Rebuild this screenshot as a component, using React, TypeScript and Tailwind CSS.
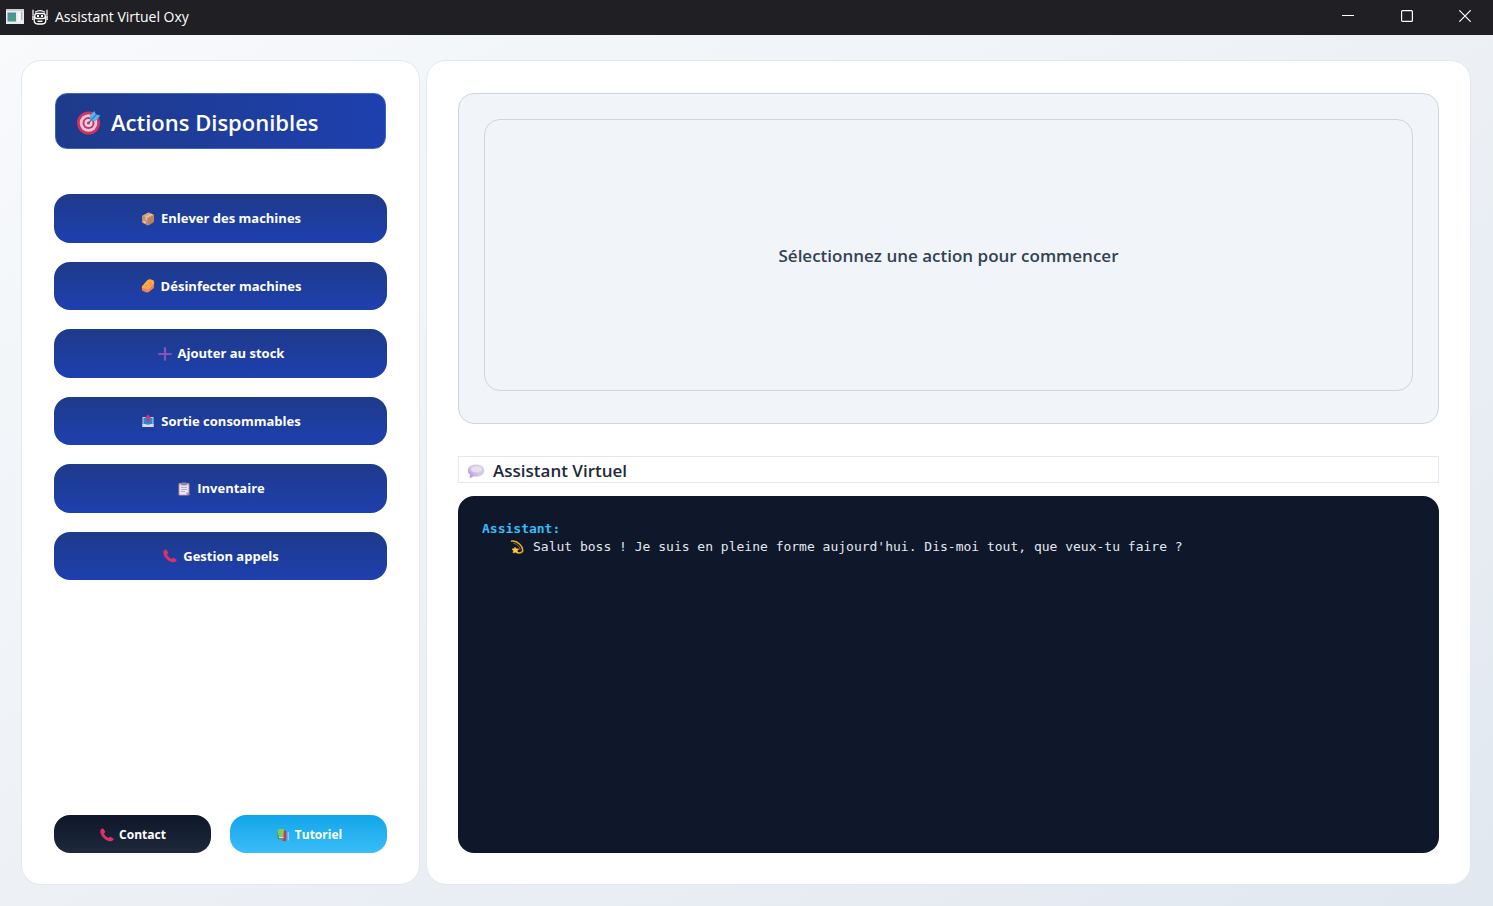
import type { ReactNode } from "react";

function TargetIcon() {
  return (
    <svg viewBox="0 0 26 26" className="size-[26px] shrink-0" aria-hidden="true">
      <circle cx="12.5" cy="14" r="11.500" fill="#d0335f" />
      <circle cx="12.5" cy="14" r="8.800" fill="#e6c6de" />
      <circle cx="12.5" cy="14" r="6" fill="#d0335f" />
      <circle cx="12.5" cy="14" r="4" fill="#ecd7ea" />
      <circle cx="12.5" cy="14" r="1.600" fill="#d0335f" />
      <path d="M12.500 14 18 8.500" stroke="#5b5f8f" strokeWidth="1.500" />
      <path d="m14.500 11.500-.6-5L18.500 2l1.300 3.500 4.500 1-4.700 5.400z" fill="#55b4ee" />
      <path d="m15 11 5.500-5.500" stroke="#2a7fd0" strokeWidth="1.200" />
    </svg>
  );
}

function BoxIcon() {
  return (
    <svg viewBox="0 0 14 14" className="size-[14px] shrink-0" aria-hidden="true">
      <path d="M7.500.500 13 3v7l-5.500 3.500L1 10.500V4z" fill="#b98260" />
      <path d="M7.500.500 13 3 7 6 1 4z" fill="#d9a77d" />
      <path d="M7 6v7.500L1 10.500V4z" fill="#c58f73" />
      <path d="m10.500 1.800-6 3v3l1.500.700V5.500l6-3z" fill="#e7c4a0" />
      <path d="m2.500 8.500 2 1v2l-2-1z" fill="#e8d0d4" />
    </svg>
  );
}

function SpongeIcon() {
  return (
    <svg viewBox="0 0 14 14" className="size-[14px] shrink-0" aria-hidden="true">
      <path d="M.800 8 6 1.800Q7.500 0 9.500.500l2.500.800q1.400.700 1.200 2.500L12.800 9 7.500 13.200q-1 .800-2.500 0L1.800 12Q.600 11 .800 8z" fill="#f47d62" />
      <path d="M.800 7.500 6 1.800Q7.500 0 9.500.500l2.500.800q1.500 1 .900 3L8 10q-1 1-2.500.200L1.800 9Q.600 8.500.800 7.500z" fill="#fdac45" />
      <g fill="#e98734">
        <circle cx="8" cy="3.500" r=".6" />
        <circle cx="5" cy="6.500" r=".7" />
        <circle cx="9.500" cy="5" r=".6" />
        <circle cx="6.500" cy="8.500" r=".5" />
      </g>
    </svg>
  );
}

function PlusIcon() {
  return (
    <svg viewBox="0 0 14 14" className="size-[14px] shrink-0" aria-hidden="true">
      <path d="M7 1.200v11.600M1.200 7h11.600" stroke="#8355b8" strokeWidth="2.200" strokeLinecap="round" />
    </svg>
  );
}

function OutboxIcon() {
  return (
    <svg viewBox="0 0 14 14" className="size-[14px] shrink-0" aria-hidden="true">
      <path d="M1.500 3h11v10h-11z" fill="#c9cbe6" />
      <path d="M2.500 4h9v6.500h-9z" fill="#238bd3" />
      <path d="M1.500 10h3l1 1h3l1-1h3v3h-11z" fill="#ded9ed" />
      <path d="M7 .300 10 4H8.200v4H5.800V4H4z" fill="#dc3167" />
    </svg>
  );
}

function ClipboardIcon() {
  return (
    <svg viewBox="0 0 14 14" className="size-[14px] shrink-0" aria-hidden="true">
      <rect x="1.500" y="1" width="11" height="12.500" rx="1" fill="#b58d91" />
      <path d="M2.500 2.500h9v7.500L9 12.700H2.500z" fill="#eee6f7" />
      <rect x="4" y=".5" width="6" height="3" rx="1" fill="#8c889f" />
      <path d="M4 5.500h6M4 7.500h6M4 9.500h4" stroke="#a19dba" strokeWidth=".8" />
      <path d="M9 12.700V10h2.500z" fill="#c9bdd6" />
    </svg>
  );
}

function PhoneIcon() {
  return (
    <svg viewBox="0 0 14 14" className="size-[14px] shrink-0" aria-hidden="true">
      <path
        d="M1 1.300Q2.500-.300 3.700 1L5 3.300q.500 1-.500 1.700-.700.500-.200 1.200 1.300 2.500 3.700 3.600.700.300 1.200-.400.700-.900 1.700-.300l2.400 1.500q.700.600 0 1.400-2 2.200-5.500.800Q1.500 10 .400 4.500.100 2.500 1 1.300z"
        fill="#dc3067"
      />
    </svg>
  );
}

function BooksIcon() {
  return (
    <svg viewBox="0 0 14 14" className="size-[14px] shrink-0" aria-hidden="true">
      <path d="M9.500 4h3.500v8.500H9.500z" fill="#5b8fd6" />
      <path d="M11.500 4H13v8.500h-1.500z" fill="#9cc0ec" />
      <path d="M6.500 2.500H10V13H6.500z" fill="#c0395f" />
      <path d="M1.500 2.500 3 1h5l-.500 8H1.500z" fill="#83ca57" />
      <path d="M1.500 9h6v1.500H2.500z" fill="#d8e8d0" />
      <path d="M1.500 2.500V10l1 1.300H7v-1H3z" fill="#3b8e58" />
    </svg>
  );
}

function BubbleIcon() {
  return (
    <svg viewBox="0 0 18 16" className="h-[16px] w-[18px] shrink-0" aria-hidden="true">
      <defs>
        <linearGradient id="bubble" x1="1" y1="0" x2="0" y2="1">
          <stop offset="0" stopColor="#d8d5df" />
          <stop offset=".55" stopColor="#d3c6e8" />
          <stop offset="1" stopColor="#a985d6" />
        </linearGradient>
      </defs>
      <path d="M9 1.500c5 0 8.300 2.300 8.300 5.900S14 13.500 9 13.500q-1.300 0-2.500-.3Q5 14.800 2.300 15q1-1.300.7-3.200Q.700 10.300.700 7.500C.700 3.800 4 1.500 9 1.500z" fill="url(#bubble)" />
      <ellipse cx="9.500" cy="6.300" rx="5.500" ry="3" fill="#eeeaf5" opacity=".7" />
    </svg>
  );
}

function DizzyIcon() {
  return (
    <svg viewBox="0 0 14 14" className="size-[14px] shrink-0" aria-hidden="true">
      <path d="M1 1.200Q5.500.200 9.500 4t3 7.500Q10.500 13.600 6.500 12.500" fill="none" stroke="#e9ad22" strokeWidth="1.500" />
      <path d="M3.500 3.200Q7 4 8.500 6t1.700 4" fill="none" stroke="#b57f1c" strokeWidth=".8" />
      <path d="m5 7.200 1.200 1.600 2.500.200-1.500 1.700.5 2.100-2.400-.600-2.300.600.500-2.100L2 9l2.100-.200z" fill="#ffcb3c" stroke="#ffcb3c" strokeWidth=".6" />
    </svg>
  );
}

function RobotIcon() {
  return (
    <svg viewBox="0 0 16 16" className="size-[16px] shrink-0" fill="none" stroke="#fff" aria-hidden="true">
      <path d="M3 3.200Q8 .200 13 3.200M2.200 7v5q.300 3 3.300 3h5q3 0 3.300-3V7" strokeWidth="1.300" />
      <path d="M1 .800v6M15 .800v6M.900 7v4M15.100 7v4" strokeWidth="1.200" />
      <rect x="2.800" y="4.500" width="10.400" height="5" rx="2" strokeWidth="1.300" />
      <path d="M5 7.100h2M9 7.100h2" strokeWidth="2" />
      <path d="M5.500 12.300h5" strokeWidth="1.400" />
    </svg>
  );
}

function AppIcon() {
  return (
    <svg viewBox="0 0 18 15" className="h-[15px] w-[18px] shrink-0" aria-hidden="true">
      <defs>
        <linearGradient id="app-pane" x1="0" y1="0" x2="1" y2="1">
          <stop offset="0" stopColor="#4c8fa6" />
          <stop offset="1" stopColor="#4e9b78" />
        </linearGradient>
      </defs>
      <path d="M0 0h18v15H0z" fill="#e9ebec" />
      <path d="M0 0h18v2H0z" fill="#c9cfd2" />
      <path d="M1.500 3.500h8.500v9H1.500z" fill="url(#app-pane)" />
      <path d="M11.500 3.500H14v9h-2.500z" fill="#f8f8f8" />
      <path d="M15 2.500h1.500v8.500H15z" fill="#b5babd" />
    </svg>
  );
}

const actions: { label: string; icon: ReactNode }[] = [
  { label: "Enlever des machines", icon: <BoxIcon /> },
  { label: "Désinfecter machines", icon: <SpongeIcon /> },
  { label: "Ajouter au stock", icon: <PlusIcon /> },
  { label: "Sortie consommables", icon: <OutboxIcon /> },
  { label: "Inventaire", icon: <ClipboardIcon /> },
  { label: "Gestion appels", icon: <PhoneIcon /> },
];

function TitleBar() {
  return (
    <header className="flex h-[35px] shrink-0 items-center justify-between bg-[#202024] text-white">
      <div className="flex items-center pb-0.5 pl-[6px]">
        <AppIcon />
        <span className="ml-2 mr-[7px]">
          <RobotIcon />
        </span>
        <span className="text-[14px] leading-5">Assistant Virtuel Oxy</span>
      </div>
      <div className="flex h-full items-center pb-[3px]">
        <button type="button" aria-label="Réduire" className="flex h-full w-[58px] items-center justify-center">
          <svg viewBox="0 0 12 12" className="size-3" stroke="#fff" aria-hidden="true">
            <path d="M0 5.500h12" />
          </svg>
        </button>
        <button type="button" aria-label="Agrandir" className="flex h-full w-[60px] items-center justify-center">
          <svg viewBox="0 0 12 12" className="size-3" stroke="#fff" fill="none" aria-hidden="true">
            <rect x=".6" y=".6" width="10.800" height="10.800" rx="1" strokeWidth="1.200" />
          </svg>
        </button>
        <button type="button" aria-label="Fermer" className="flex h-full w-14 items-center justify-center">
          <svg viewBox="0 0 12 12" className="size-3" stroke="#fff" aria-hidden="true">
            <path d="m.3.3 11.400 11.400M11.700.3.3 11.700" strokeWidth="1.200" />
          </svg>
        </button>
      </div>
    </header>
  );
}

export default function App() {
  return (
    <div className="flex min-h-screen flex-col bg-linear-to-br from-[#f8fafc] to-[#e2e8f0] font-['Open_Sans','Noto_Sans',sans-serif]">
      <TitleBar />
      <div className="flex flex-1 gap-[6px] pt-[25px] pr-[22px] pb-[21px] pl-[21px]">
        <aside className="flex w-[399px] shrink-0 flex-col rounded-[20px] border border-[#e2e8f0] bg-white px-8 pt-8 pb-[31px]">
          <h1 className="mx-px flex h-[56px] items-center gap-[9px] rounded-xl border border-[#3b66c8] bg-linear-to-r from-[#1e3a8a] to-[#1e40af] px-5 pt-0.5 text-[22px] font-semibold text-white">
            <TargetIcon />
            Actions Disponibles
          </h1>
          <nav className="mt-[45px] grid h-[386px] grid-rows-6 gap-[19px]">
            {actions.map((action) => (
              <button
                key={action.label}
                type="button"
                className="flex items-center justify-center gap-[6px] rounded-2xl bg-linear-to-b from-[#1e3a8a] to-[#1e40af] pt-px pl-px text-[13px] font-bold text-white"
              >
                {action.icon}
                {action.label}
              </button>
            ))}
          </nav>
          <div className="mt-auto grid grid-cols-2 gap-[19px]">
            <button
              type="button"
              className="flex h-[38px] items-center justify-center gap-[5px] rounded-2xl bg-linear-to-b from-[#0f172a] to-[#1e293b] pt-px pl-px text-[12px] font-bold text-white"
            >
              <PhoneIcon />
              Contact
            </button>
            <button
              type="button"
              className="flex h-[38px] items-center justify-center gap-[5px] rounded-2xl bg-linear-to-b from-[#0ea5e9] to-[#38bdf8] pt-px pl-px text-[12px] font-bold text-white"
            >
              <BooksIcon />
              Tutoriel
            </button>
          </div>
        </aside>
        <main className="flex min-w-0 flex-1 flex-col rounded-[20px] border border-[#e2e8f0] bg-white pt-8 pr-[31px] pb-[31px] pl-[31px]">
          <section className="flex h-[331px] rounded-2xl border border-[#cbd5e1] bg-[#f1f5f9] p-[25px] pb-8">
            <div className="flex flex-1 items-center justify-center rounded-2xl border border-[#cbd5e1] pt-0.5">
              <p className="text-[17px] font-semibold text-[#334155]">Sélectionnez une action pour commencer</p>
            </div>
          </section>
          <h2 className="mt-8 flex h-[27px] items-center gap-2 border border-[#e2e8f0] px-2 pt-0.5 text-[17px] font-semibold text-[#1e293b]">
            <BubbleIcon />
            Assistant Virtuel
          </h2>
          <section
            role="log"
            aria-label="Conversation"
            className="mt-[13px] flex-1 rounded-2xl bg-[#0f172a] px-6 py-6 font-['DejaVu_Sans_Mono','Liberation_Mono',monospace] text-[13px] leading-[18px] text-[#e2e8f0]"
          >
            <p className="font-bold text-[#38bdf8]">Assistant:</p>
            <p className="flex items-center gap-[9px] pl-7">
              <DizzyIcon />
              Salut boss ! Je suis en pleine forme aujourd'hui. Dis-moi tout, que veux-tu faire ?
            </p>
          </section>
        </main>
      </div>
    </div>
  );
}
